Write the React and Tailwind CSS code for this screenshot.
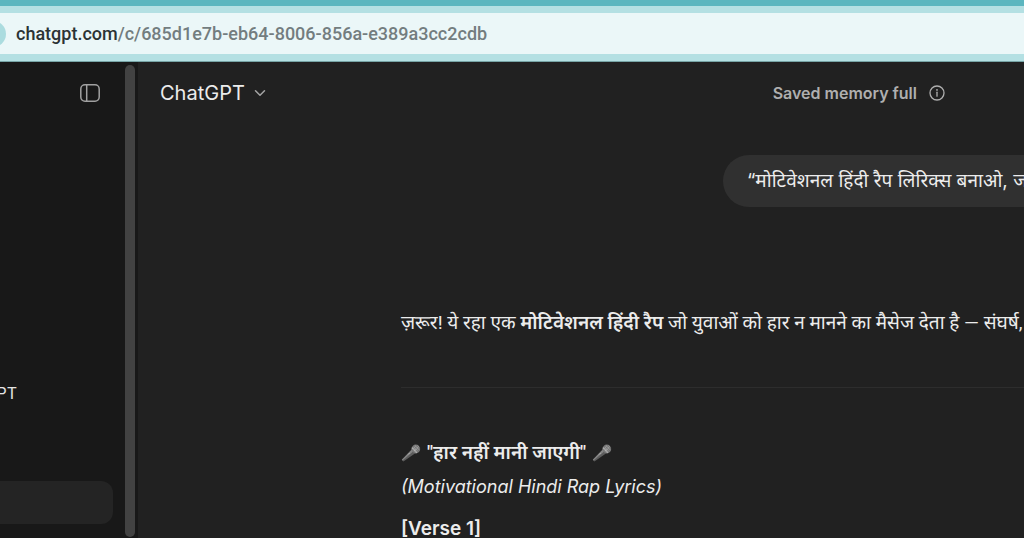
import { ChevronDown } from "lucide-react";

function SidebarIcon() {
  return (
    <svg viewBox="0 0 20 18" fill="none" stroke="currentColor" strokeWidth="1.5" className="h-[18px] w-5">
      <rect x="0.8" y="0.8" width="18.4" height="16.4" rx="4.2" />
      <path d="M6.7 1v16" />
    </svg>
  );
}

function InfoIcon() {
  return (
    <svg viewBox="0 0 16 16" fill="none" stroke="currentColor" strokeWidth="1.3" className="size-4">
      <circle cx="8" cy="8" r="7" />
      <path d="M8 7.2v4" strokeLinecap="round" />
      <circle cx="8" cy="4.9" r="0.9" fill="currentColor" stroke="none" />
    </svg>
  );
}

function Microphone() {
  return (
    <svg viewBox="0 0 20 18" className="h-[18px] w-5 shrink-0" aria-hidden="true">
      <path d="M11 5.2 14.6 9 2.4 17.4 0.8 15.8Z" fill="#5d5d5d" />
      <path d="M11 5.2 12.6 6.9 1.6 16.6 0.8 15.8Z" fill="#858585" />
      <path d="M8.4 9.3 7.4 10.3" stroke="#c5c5c5" strokeWidth="1" />
      <circle cx="14.8" cy="5" r="4.4" fill="#777777" />
      <circle cx="15.4" cy="4" r="2.7" fill="#989898" />
      <path d="M11 3.6 15.8 8.8" stroke="#b0b0b0" strokeWidth="1.3" />
      <path d="m13 1.8 5 5M15 1l3.8 3.8M12.8 5.6l4-4M14.8 7.4l4-4" stroke="#616161" strokeWidth="0.5" />
    </svg>
  );
}

function AddressBar() {
  return (
    <div className="shrink-0 border-t-6 border-b border-t-[#5bb6bf] border-b-[#78a5a7] bg-[#b4e0e3] pt-[7px] pb-[7px]">
      <div className="flex h-[41px] items-center overflow-hidden bg-[#ebf7f8]">
        <span className="-ml-5 size-[26px] shrink-0 rounded-full bg-[#abdcdf]" />
        <a
          href="#chat"
          className="ml-[10px] font-[Roboto,sans-serif] text-lg leading-6 font-medium whitespace-nowrap text-[#737d7f]"
        >
          <span className="text-[#2b3335]">chatgpt.com</span>/c/685d1e7b-eb64-8006-856a-e389a3cc2cdb
        </a>
      </div>
    </div>
  );
}

function Sidebar() {
  return (
    <aside className="flex w-[138px] shrink-0 bg-[#181818]">
      <nav className="flex flex-1 flex-col pt-[22px]">
        <button type="button" aria-label="Close sidebar" className="mr-[25px] self-end text-[#a0a0a0]">
          <SidebarIcon />
        </button>
        <div className="mt-[279px] flex w-[17px] justify-end overflow-hidden text-base leading-6 text-[#e4e4e4]">
          <span>PT</span>
        </div>
        <button type="button" aria-label="Current chat" className="mt-[76px] mr-3 h-[43px] rounded-r-xl bg-[#242424]" />
      </nav>
      <div className="mt-[3px] mr-[3px] mb-px w-[10px] rounded-full bg-[#424242]" />
    </aside>
  );
}

export default function App() {
  return (
    <div className="flex h-screen flex-col overflow-hidden bg-[#212121] font-[Inter,'Noto_Sans_Devanagari','Noto_Sans',sans-serif]">
      <AddressBar />
      <div className="flex min-h-0 flex-1">
        <Sidebar />
        <main className="min-w-0 flex-1 overflow-hidden text-[#ececec]">
          <header className="flex h-[62px] items-center justify-between pr-[79px] pl-[22px]">
            <button type="button" className="flex items-center gap-1.5 text-xl leading-7">
              ChatGPT
              <ChevronDown className="size-[18px] text-[#a5a5a5]" strokeWidth={2} />
            </button>
            <div className="flex items-center gap-3 text-base leading-6 font-semibold text-[#afafaf]">
              Saved memory full
              <InfoIcon />
            </div>
          </header>

          <div className="ml-[263px] pt-[31px] text-[19px] whitespace-nowrap">
            <div className="ml-[322px] rounded-l-full bg-[#303030] py-3 pl-6 leading-7">
              “मोटिवेशनल हिंदी रैप लिरिक्स बनाओ, ज
            </div>
            <p className="mt-[102px] font-[Roboto,'Noto_Sans_Devanagari','Noto_Sans',sans-serif] leading-7">
              ज़रूर! ये रहा एक <strong className="font-semibold">मोटिवेशनल हिंदी रैप</strong> जो युवाओं को हार न
              मानने का मैसेज देता है — संघर्ष,
            </p>
            <hr className="mt-[50px] border-[#2d2d2d]" />
            <h2 className="mt-[51px] flex items-center gap-1.5 font-[Roboto,'Noto_Sans_Devanagari','Noto_Sans',sans-serif] leading-7 font-semibold">
              <Microphone />
              <span>"हार नहीं मानी जाएगी"</span>
              <Microphone />
            </h2>
            <p className="mt-1.5 text-lg leading-7 italic">(Motivational Hindi Rap Lyrics)</p>
            <p className="mt-[14px] leading-7 font-semibold">[Verse 1]</p>
          </div>
        </main>
      </div>
    </div>
  );
}
